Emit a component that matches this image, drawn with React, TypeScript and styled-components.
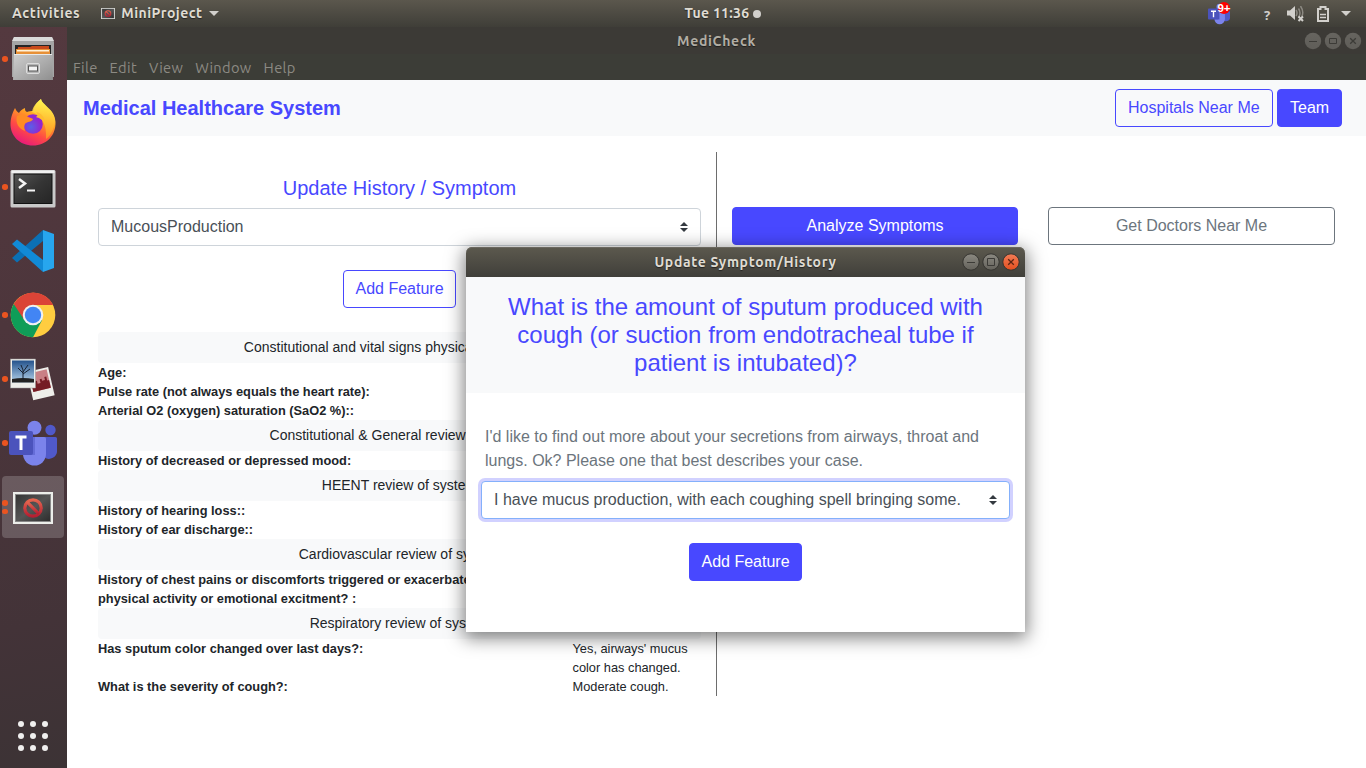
import React from "react";
import styled, { createGlobalStyle, css } from "styled-components";

const primary = "#4848ff";
const uiFont = `Ubuntu, "Noto Sans", sans-serif`;

const GlobalStyle = createGlobalStyle`
  *, *::before, *::after { box-sizing: border-box; }
  body { margin: 0; overflow: hidden; background: #fff; color: #212529; font: 400 16px/1.5 "Liberation Sans", Arial, sans-serif; }
  button { font-family: inherit; margin: 0; }
  svg { display: block; flex: none; }
`;

const Desktop = styled.div`
  position: relative;
  width: 1366px;
  height: 768px;
  display: flex;
  flex-direction: column;
  overflow: hidden;
`;

const TopBar = styled.header`
  height: 27px;
  flex: none;
  display: grid;
  grid-template-columns: 1fr auto 1fr;
  align-items: center;
  padding: 0 14px 0 12px;
  background: linear-gradient(#5b574d, #3f3e38);
  color: #dfdbd2;
  font-family: ${uiFont};
  line-height: 20px;
`;

const BarText = styled.span<{ $spacing?: number; $lift?: number }>`
  font-size: 14px;
  letter-spacing: ${(p) => p.$spacing ?? 0.3}px;
  padding-bottom: ${(p) => p.$lift ?? 0}px;
  font-weight: 700;
  white-space: nowrap;
  text-shadow: 0 1px 1px rgba(0, 0, 0, 0.5);
`;

const BarGroup = styled.div<{ $align?: string; $gap?: number }>`
  display: flex;
  align-items: center;
  justify-content: ${(p) => p.$align ?? "flex-start"};
  gap: ${(p) => p.$gap ?? 6}px;
`;

const AppIndicator = styled(BarGroup)`
  margin-left: 15px;
`;

const Clock = styled(BarGroup)`
  padding-left: 82px;
`;

const ClockDot = styled.i`
  width: 8px;
  height: 8px;
  border-radius: 50%;
  background: #d2d0cc;
`;

const Tray = styled(BarGroup)`
  height: 27px;
`;

const Workspace = styled.div`
  flex: 1;
  display: flex;
  min-height: 0;
`;

const Dock = styled.nav`
  width: 67px;
  flex: none;
  display: flex;
  flex-direction: column;
  background: linear-gradient(168deg, #54393f 0%, #4d363c 40%, #433338 80%, #3c3335 100%);
`;

const DockItem = styled.div<{ $active?: boolean }>`
  width: 62px;
  height: 62px;
  border-radius: 4px;
  display: flex;
  align-items: center;
  background: ${(p) => (p.$active ? "rgba(255,255,255,0.19)" : "transparent")};
`;

const DockList = styled.div`
  flex: 1;
  display: flex;
  flex-direction: column;
  gap: 2px;
  padding: 1px 0 0 2px;
`;

const Dots = styled.div`
  width: 7px;
  display: flex;
  flex-direction: column;
  gap: 3px;
  align-items: flex-start;
`;

const Dot = styled.i`
  width: 5.6px;
  height: 5.6px;
  border-radius: 50%;
  background: #ea5420;
`;

const AppsGrid = styled.div`
  display: grid;
  grid-template-columns: repeat(3, 6px);
  gap: 6px;
  margin: 0 0 17px 18px;
`;

const AppsDot = styled.i`
  width: 6px;
  height: 6px;
  border-radius: 50%;
  background: #f0efee;
`;

const MainWindow = styled.main`
  flex: 1;
  display: flex;
  flex-direction: column;
  background: #fff;
`;

const WindowTitle = styled.div`
  height: 27px;
  display: grid;
  grid-template-columns: 1fr auto 1fr;
  align-items: center;
  padding: 1px 3px 0;
  background: #3c3a36;
  color: #b1ada4;
  font-family: ${uiFont};
`;

const MenuBar = styled.div`
  height: 26px;
  display: flex;
  gap: 12px;
  padding: 1px 0 0 6px;
  align-items: center;
  background: #3c3d37;
  color: #8c8a83;
  font: 400 14.67px/25px ${uiFont};
`;

const MenuItem = styled.span`
  letter-spacing: 0.35px;
`;

const Controls = styled.div`
  display: flex;
  justify-content: flex-end;
`;

const Navbar = styled.div`
  height: 56px;
  display: flex;
  align-items: center;
  padding: 0 24px 0 16px;
  gap: 4.6px;
  background: #f8f9fa;
`;

const Brand = styled.h1`
  margin: 0 auto 0 0;
  color: ${primary};
  font-size: 20px;
  line-height: 30px;
  font-weight: 700;
`;

const Button = styled.button<{ $kind: "solid" | "outline" | "muted" }>`
  height: 38px;
  padding: 0 11.9px;
  border: 1px solid ${(p) => (p.$kind === "muted" ? "#6c757d" : primary)};
  border-radius: 4px;
  font-size: 16px;
  line-height: 24px;
  white-space: nowrap;
  background: ${(p) => (p.$kind === "solid" ? primary : "transparent")};
  color: ${(p) => ({ solid: "#fff", outline: primary, muted: "#6c757d" })[p.$kind]};
`;

const Content = styled.div`
  display: flex;
  padding: 16px 16px 0;
`;

const History = styled.section`
  width: 634px;
  height: 544px;
  flex: none;
  padding: 24px 15px 0;
  border-right: 1px solid #6d6d6d;
  display: flex;
  flex-direction: column;
  align-items: center;
`;

const SectionTitle = styled.h2`
  margin: 0 0 8px;
  font-size: 20px;
  line-height: 24px;
  font-weight: 400;
  color: ${primary};
`;

const Select = styled.div<{ $focused?: boolean }>`
  width: 100%;
  height: 38px;
  padding: 0 12px;
  display: flex;
  align-items: center;
  justify-content: space-between;
  border: 1px solid #ced4da;
  border-radius: 4px;
  background: #fff;
  color: #495057;
  ${(p) =>
    p.$focused &&
    css`
      border-color: #84b0fb;
      box-shadow: 0 0 0 3px rgba(72, 72, 255, 0.25);
    `}
`;

const AddRow = styled.div`
  margin: 24px 0;
`;

const Records = styled.div`
  width: 100%;
`;

const GroupTitle = styled.div`
  padding: 4px;
  border-radius: 4px;
  background: #f8f9fa;
  text-align: center;
  font-size: 14px;
  line-height: 23px;
`;

const Record = styled.div`
  display: grid;
  grid-template-columns: 444px 1fr;
  column-gap: 30.5px;
  font-size: 12.8px;
  line-height: 19px;
`;

const Label = styled.b`
  font-weight: 700;
`;

const Actions = styled.section`
  flex: 1;
  display: grid;
  grid-template-columns: 286px 287px;
  column-gap: 30px;
  padding: 55px 0 0 15px;
  align-content: start;
`;

const Dialog = styled.section`
  position: absolute;
  left: 466px;
  top: 247px;
  width: 559px;
  height: 385px;
  border-radius: 6px 6px 0 0;
  background: #fff;
  box-shadow: 0 4px 18px 2px rgba(0, 0, 0, 0.5);
`;

const DialogTitle = styled.div`
  height: 30px;
  display: grid;
  grid-template-columns: 1fr auto 1fr;
  align-items: center;
  padding: 0 4px;
  border-radius: 6px 6px 0 0;
  background: linear-gradient(#5c594e, #403f3a);
  box-shadow: inset 0 1px #6b685f;
  color: #dfdbd2;
  font-family: ${uiFont};
`;

const Question = styled.h3`
  margin: 0;
  padding: 16px 32px;
  background: #f8f9fa;
  color: ${primary};
  text-align: center;
  font-size: 24px;
  line-height: 28px;
  font-weight: 400;
`;

const DialogBody = styled.div`
  padding: 32px 15px 0;
  display: flex;
  flex-direction: column;
  align-items: center;
`;

const Hint = styled.p`
  margin: 0 0 8px;
  padding: 0 4px;
  width: 100%;
  color: #6c757d;
`;

const DialogAction = styled.div`
  margin-top: 24px;
`;

const Sorter = () => (
  <svg width="8" height="10" viewBox="0 0 4 5">
    <path fill="#343a40" d="M2 0 0 2h4zm0 5L0 3h4z" />
  </svg>
);

const WindowButton = ({ kind, tone }: { kind: "min" | "max" | "close"; tone: "dim" | "grey" | "red" }) => {
  const ink = tone === "red" ? "#5b2413" : "#3c3b37";
  return (
    <svg width="20" height="20" viewBox="0 0 20 20">
      <defs>
        <linearGradient id={`fill-${tone}`} x1="0" y1="0" x2="0" y2="1">
          <stop offset="0" stopColor={{ dim: "#66645f", grey: "#8b8981", red: "#f37c56" }[tone]} />
          <stop offset="1" stopColor={{ dim: "#605e59", grey: "#64625b", red: "#e24f1f" }[tone]} />
        </linearGradient>
      </defs>
      <circle cx="10" cy="10" r="8.2" fill={`url(#fill-${tone})`} stroke={tone === "dim" ? "none" : "#353430"} />
      {kind === "min" && <path d="M6 10.5h8" stroke={ink} />}
      {kind === "max" && <path d={tone === "grey" ? "M6.5 6.500h7v7h-7z" : "M6.5 7.500h7v5h-7z"} fill="none" stroke={ink} />}
      {kind === "close" && <path d="m7.2 7.2 5.6 5.6m0-5.6-5.6 5.6" stroke={ink} strokeWidth="1.3" />}
    </svg>
  );
};

const WindowControls = ({ active }: { active?: boolean }) => (
  <Controls>
    <WindowButton kind="min" tone={active ? "grey" : "dim"} />
    <WindowButton kind="max" tone={active ? "grey" : "dim"} />
    <WindowButton kind="close" tone={active ? "red" : "dim"} />
  </Controls>
);

const FilesIcon = () => (
  <svg width="48" height="48" viewBox="0 0 48 48">
    <defs>
      <linearGradient id="cab" x1="0" y1="0" x2="1" y2="1">
        <stop offset="0" stopColor="#cfcfcf" />
        <stop offset="1" stopColor="#8f8f8f" />
      </linearGradient>
    </defs>
    <path d="M5 2h38l2 5v35H3V7z" fill="#a5a5a5" />
    <path d="M5 2h38l2 4H3z" fill="#dadada" />
    <path d="M6 10h36v10H6z" fill="#252525" />
    <path d="M9 12h12l2-1h17v8H8z" fill="#c84a1c" />
    <path d="M7 14h34v6H7z" fill="#e79037" />
    <path d="M8 15h32v1.500H8z" fill="#fff1d8" />
    <path d="M5 19h38l1 26H4z" fill="url(#cab)" />
    <path d="M5 19.500h38" stroke="#e9e9e9" />
    <rect x="17.500" y="28.500" width="13" height="10" rx="1.500" fill="#b5b5b5" stroke="#ddd" />
    <rect x="19.500" y="31" width="9" height="5" fill="#f3f3f3" stroke="#555" />
  </svg>
);

const FirefoxIcon = () => (
  <svg width="48" height="48" viewBox="0 0 48 48">
    <defs>
      <linearGradient id="fox" x1="0.8" y1="0" x2="0.3" y2="1">
        <stop offset="0.1" stopColor="#fff44f" />
        <stop offset="0.4" stopColor="#ffa022" />
        <stop offset="0.7" stopColor="#ff4a45" />
        <stop offset="1" stopColor="#e6187d" />
      </linearGradient>
      <linearGradient id="flame" x1="0" y1="0" x2="0" y2="1">
        <stop offset="0" stopColor="#fff44f" />
        <stop offset="1" stopColor="#ff9b22" />
      </linearGradient>
      <radialGradient id="globe" cx="0.4" cy="0.65">
        <stop offset="0" stopColor="#5a5fe8" />
        <stop offset="1" stopColor="#9226cf" />
      </radialGradient>
    </defs>
    <path d="M6 9c1 2 2 4 4 5 1-2 3-4 6-5 0 2 0 3 2 4 2-1 4-1 6-1 1-5 4-9 8-12 1 6 14 10 14.500 23C47 37 37 46.500 24 46.500S1 37 1.500 24C2 17 4 13 6 9z" fill="url(#fox)" />
    <path d="M23 13c1-6 5-10 9-13 1 7 13 10 14 22-1 8-4 14-9 18 1-10-2-23-14-27z" fill="url(#flame)" opacity=".8" />
    <circle cx="24" cy="25" r="9.800" fill="url(#globe)" />
    <path d="M8 17c4-2 8-2 11 1 2 1 4 1 5 2-1 3-4 2-7 4-2 1-2 5-1 8-6-2-10-8-8-15z" fill="#ff8c24" />
    <path d="M27 13c6 1 9 6 9 12-3-5-6-6-9-7 2-1 2-3 0-5z" fill="#ffbd2f" />
  </svg>
);

const TerminalIcon = () => (
  <svg width="48" height="48" viewBox="0 -1 48 48">
    <defs>
      <linearGradient id="term" x1="0" y1="0" x2="1" y2="1">
        <stop offset="0" stopColor="#555" />
        <stop offset="0.5" stopColor="#353535" />
        <stop offset="1" stopColor="#252525" />
      </linearGradient>
    </defs>
    <rect x="1.500" y="6" width="45" height="37.500" rx="1.500" fill="#c9c9c9" />
    <rect x="2.500" y="6.500" width="43" height="2.500" fill="#f1f1f1" />
    <rect x="5" y="10" width="38" height="29.500" fill="url(#term)" stroke="#111" />
    <path d="m10 15 6 4.500-6 4.500" fill="none" stroke="#f4f4f4" strokeWidth="2.500" />
    <path d="M18 26.500h8" stroke="#f4f4f4" strokeWidth="2" />
  </svg>
);

const CodeIcon = () => (
  <svg width="48" height="48" viewBox="0 0 48 48">
    <path d="m3 31 31-28v11L8 35.500z" fill="#0b70b5" />
    <path d="m3 17 5-4.500L34 33v12z" fill="#118ad6" />
    <path d="m34 3 11 4v34l-11 4z" fill="#27a6ee" />
  </svg>
);

const ChromeIcon = () => (
  <svg width="48" height="48" viewBox="0 0 48 48">
    <circle cx="24" cy="24" r="22.300" fill="#ffcd40" />
    <path d="M24 24 4.700 12.900a22.300 22.300 0 0 0 19.300 33.400l9-17z" fill="#0f9d58" />
    <path d="M24 14h20.200A22.300 22.300 0 0 0 4.700 12.900L15.300 29z" fill="#db4437" />
    <circle cx="24" cy="24" r="10.300" fill="#f1f1f1" />
    <circle cx="24" cy="24" r="8.200" fill="#4285f4" />
  </svg>
);

const PhotosIcon = () => (
  <svg width="48" height="48" viewBox="0 0 48 48">
    <defs>
      <linearGradient id="sky" x1="0" y1="0" x2="0" y2="1">
        <stop offset="0" stopColor="#24528c" />
        <stop offset="1" stopColor="#b6d4ec" />
      </linearGradient>
    </defs>
    <g transform="rotate(-13 32 30)">
      <rect x="21" y="14" width="22" height="29" fill="#eeeeea" />
      <rect x="23" y="16" width="18" height="19" fill="#c98085" />
      <path d="M23 27h3v-2h3v3h3v-4h2v2h3v-3h2v4h2v8H23z" fill="#751c24" />
    </g>
    <rect x="1.500" y="4" width="25" height="29" fill="#eeeeea" stroke="#999" strokeWidth=".5" />
    <rect x="3" y="5.500" width="22" height="22" fill="url(#sky)" />
    <path d="M3 24q11-2 22 0v3.500H3z" fill="#222" />
    <path d="M14 25V15M14 18l-5-5m5 4 5-7m-5 9 7-5M14 15l-2-5" stroke="#172131" strokeWidth="1" fill="none" />
  </svg>
);

const TeamsIcon = ({ size = 48 }: { size?: number }) => (
  <svg width={size} height={size} viewBox="0 -4 48 48">
    <circle cx="41.500" cy="7" r="5.200" fill="#5059c9" />
    <path d="M36 14h10.500q1.500 0 1.500 1.500V27a8 8 0 0 1-13 7z" fill="#5059c9" />
    <circle cx="25.500" cy="4.700" r="7" fill="#7b83eb" />
    <path d="M14 14h21.500q1.500 0 1.500 1.500V31a11.500 11.500 0 0 1-23 0z" fill="#7b83eb" />
    <path d="M14 14h12v18H14.500z" fill="#464eb8" opacity=".4" />
    <rect y="8" width="24" height="24" rx="2" fill="#4b53bc" />
    <path d="M6.500 14h11M12 13v14" stroke="#fff" strokeWidth="3" />
  </svg>
);

const BlockedIcon = ({ width = 40, height = 32 }: { width?: number; height?: number }) => (
  <svg width={width} height={height} viewBox="0 0 40 32">
    <defs>
      <linearGradient id="screen" x1="0" y1="0" x2="1" y2="1">
        <stop offset="0" stopColor="#333" />
        <stop offset="0.5" stopColor="#555" />
        <stop offset="1" stopColor="#2c2c2c" />
      </linearGradient>
      <linearGradient id="ban" x1="0" y1="0" x2="0" y2="1">
        <stop offset="0" stopColor="#e4654f" />
        <stop offset="1" stopColor="#b51f32" />
      </linearGradient>
    </defs>
    <rect width="40" height="32" fill="#eceeea" />
    <rect x="2.500" y="2.500" width="35" height="27" fill="url(#screen)" stroke="#888" />
    <g fill="none" stroke="url(#ban)" strokeWidth="3.200">
      <circle cx="20" cy="16" r="8.200" />
      <path d="m14.200 10.200 11.600 11.600" />
    </g>
  </svg>
);

const Caret = () => (
  <svg width="10" height="5" viewBox="0 0 10 5">
    <path d="M0 0h10L5 5z" fill="#d2d0cc" />
  </svg>
);

const TeamsTrayBox = styled.div`
  position: relative;
  width: 23px;
  height: 24px;
  margin-right: 33px;
  padding-top: 1px;
`;

const Badge = styled.span`
  position: absolute;
  left: 10px;
  top: 0;
  width: 12px;
  height: 12px;
  border-radius: 6px;
  background: #f00;
  color: #fff;
  font: 700 11.5px/12px "Liberation Sans", sans-serif;
  white-space: nowrap;
  display: flex;
  justify-content: center;
`;

const HelpGlyph = styled.span`
  font: 700 13px/20px "Noto Sans", sans-serif;
  color: #d2d0cc;
  width: 8px;
  margin: 3px 15px 0 0;
`;

const VolumeIcon = () => (
  <svg width="18" height="16" viewBox="0 0 18 16">
    <path d="M0 4.500h3l5-4.500v14L3 9.500H0z" fill="#d2d0cc" />
    <path d="M9 4q2 3 0 6M11.500 2.500q3 4.500 0 9M13.500 0q4 6 1 11" fill="none" stroke="#8c8982" strokeWidth="1.500" />
    <path d="m11.500 10.500 4.500 4.500m0-4.500-4.500 4.500" stroke="#d2d0cc" strokeWidth="2" />
  </svg>
);

const BatteryIcon = () => (
  <svg width="12" height="16" viewBox="0 0 12 16">
    <path d="M1 3h2.500V1h5v2H11v12H1z" fill="none" stroke="#d2d0cc" strokeWidth="2" />
    <path d="M3 8.500h6M3 11.500h6" stroke="#d2d0cc" strokeWidth="1.500" />
  </svg>
);

const TrayItem = styled.div<{ $after: number; $down?: number }>`
  margin-right: ${(p) => p.$after}px;
  padding-top: ${(p) => p.$down ?? 0}px;
`;

const dockItems = [
  { icon: <FilesIcon />, windows: 1 },
  { icon: <FirefoxIcon />, windows: 0 },
  { icon: <TerminalIcon />, windows: 1 },
  { icon: <CodeIcon />, windows: 0 },
  { icon: <ChromeIcon />, windows: 1 },
  { icon: <PhotosIcon />, windows: 1 },
  { icon: <TeamsIcon />, windows: 1 },
  { icon: <BlockedIcon />, windows: 2, active: true },
];

const DockIcon = styled.span<{ $active?: boolean }>`
  width: 48px;
  padding-top: ${(p) => (p.$active ? 2 : 0)}px;
  display: flex;
  justify-content: center;
`;

const groups: { title: string; rows: [string, string?][] }[] = [
  {
    title: "Constitutional and vital signs physical examination",
    rows: [["Age:"], ["Pulse rate (not always equals the heart rate):"], ["Arterial O2 (oxygen) saturation (SaO2 %)::"]],
  },
  { title: "Constitutional & General review of system", rows: [["History of decreased or depressed mood:"]] },
  { title: "HEENT review of system", rows: [["History of hearing loss::"], ["History of ear discharge::"]] },
  {
    title: "Cardiovascular review of system",
    rows: [["History of chest pains or discomforts triggered or exacerbated by physical activity or emotional excitment? :"]],
  },
  {
    title: "Respiratory review of system",
    rows: [
      ["Has sputum color changed over last days?:", "Yes, airways' mucus color has changed."],
      ["What is the severity of cough?:", "Moderate cough."],
    ],
  },
];

export default function App() {
  return (
    <Desktop>
      <GlobalStyle />
      <TopBar>
        <BarGroup>
          <BarText $lift={1} $spacing={0.6}>Activities</BarText>
          <AppIndicator>
            <BlockedIcon width={14} height={11} />
            <BarText $lift={1} $spacing={0.45}>MiniProject</BarText>
            <Caret />
          </AppIndicator>
        </BarGroup>
        <Clock $gap={4}>
          <BarText $lift={1}>Tue 11:36</BarText>
          <ClockDot />
        </Clock>
        <Tray $align="flex-end" $gap={0}>
          <TeamsTrayBox>
            <TeamsIcon size={22} />
            <Badge>9+</Badge>
          </TeamsTrayBox>
          <HelpGlyph>?</HelpGlyph>
          <TrayItem $after={12} $down={1}><VolumeIcon /></TrayItem>
          <TrayItem $after={12}><BatteryIcon /></TrayItem>
          <TrayItem $after={1}><Caret /></TrayItem>
        </Tray>
      </TopBar>
      <Workspace>
        <Dock>
          <DockList>
            {dockItems.map((item, i) => (
              <DockItem key={i} $active={item.active}>
                <Dots>
                  {Array.from({ length: item.windows }, (_, n) => <Dot key={n} />)}
                </Dots>
                <DockIcon $active={item.active}>{item.icon}</DockIcon>
              </DockItem>
            ))}
          </DockList>
          <AppsGrid>
            {Array.from({ length: 9 }, (_, n) => <AppsDot key={n} />)}
          </AppsGrid>
        </Dock>
        <MainWindow>
          <WindowTitle>
            <span />
            <BarText $spacing={0.7}>MediCheck</BarText>
            <WindowControls />
          </WindowTitle>
          <MenuBar>
            {["File", "Edit", "View", "Window", "Help"].map((m) => <MenuItem key={m}>{m}</MenuItem>)}
          </MenuBar>
          <Navbar>
            <Brand>Medical Healthcare System</Brand>
            <Button $kind="outline">Hospitals Near Me</Button>
            <Button $kind="solid">Team</Button>
          </Navbar>
          <Content>
            <History>
              <SectionTitle>Update History / Symptom</SectionTitle>
              <Select>MucousProduction<Sorter /></Select>
              <AddRow><Button $kind="outline">Add Feature</Button></AddRow>
              <Records>
                {groups.map((g) => (
                  <React.Fragment key={g.title}>
                    <GroupTitle>{g.title}</GroupTitle>
                    {g.rows.map(([label, value]) => (
                      <Record key={label}>
                        <Label>{label}</Label>
                        <span>{value}</span>
                      </Record>
                    ))}
                  </React.Fragment>
                ))}
              </Records>
            </History>
            <Actions>
              <Button $kind="solid">Analyze Symptoms</Button>
              <Button $kind="muted">Get Doctors Near Me</Button>
            </Actions>
          </Content>
        </MainWindow>
      </Workspace>
      <Dialog>
        <DialogTitle>
          <span />
          <BarText $spacing={0.66}>Update Symptom/History</BarText>
          <WindowControls active />
        </DialogTitle>
        <Question>
          What is the amount of sputum produced with cough (or suction from endotracheal tube if patient is intubated)?
        </Question>
        <DialogBody>
          <Hint>
            I'd like to find out more about your secretions from airways, throat and lungs. Ok? Please one that best
            describes your case.
          </Hint>
          <Select $focused>I have mucus production, with each coughing spell bringing some.<Sorter /></Select>
          <DialogAction><Button $kind="solid">Add Feature</Button></DialogAction>
        </DialogBody>
      </Dialog>
    </Desktop>
  );
}
